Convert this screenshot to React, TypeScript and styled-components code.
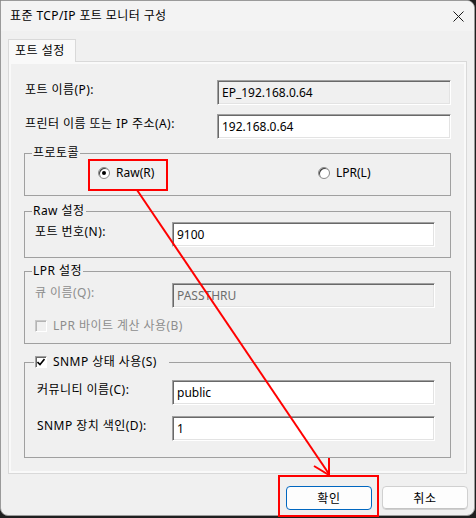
import styled, { createGlobalStyle } from 'styled-components';

const GlobalStyle = createGlobalStyle`
  html, body {
    margin: 0;
    padding: 0;
    background: #1f1f1f;
  }
  body {
    font-family: 'Noto Sans', 'Noto Sans CJK KR', sans-serif;
    font-size: 12px;
    color: #000;
  }
`;

const Screen = styled.div`
  position: relative;
  width: 476px;
  height: 518px;
`;

const Window = styled.div`
  box-sizing: border-box;
  width: 475px;
  height: 516px;
  display: flex;
  flex-direction: column;
  background: #f0f0f0;
  border: 1px solid #9a9a9a;
  border-radius: 0 8px 8px 8px;
  overflow: hidden;
`;

const TitleBar = styled.div`
  height: 30px;
  flex: none;
  display: flex;
  align-items: center;
  justify-content: space-between;
  padding: 0 9px 0 9px;
  background: #f3f3f3;
`;

const Title = styled.span`
  font-size: 12px;
  line-height: 16px;
  letter-spacing: 0.4px;
  color: #000;
`;

const CloseIcon = styled.svg`
  width: 11px;
  height: 11px;
  margin-right: 1px;
`;

const Body = styled.div`
  flex: 1;
  display: flex;
  flex-direction: column;
  padding: 8px 6px 0 7px;
`;

const TabStrip = styled.div`
  display: flex;
  position: relative;
  z-index: 1;
  margin-bottom: -1px;
`;

const Tab = styled.div`
  box-sizing: border-box;
  height: 23px;
  width: 68px;
  padding: 3px 0 0 6px;
  border: 1px solid #d9d9d9;
  border-bottom: none;
  background: #f9f9f9;
  line-height: 16px;
  letter-spacing: 0.5px;
`;

const Panel = styled.div`
  box-sizing: border-box;
  width: 459px;
  height: 413px;
  display: flex;
  flex-direction: column;
  padding: 18px 15px 0 15px;
  border: 1px solid #d9d9d9;
  box-shadow: inset 0 0 0 2px #f9f9f9;
`;

const FieldRow = styled.div<{ $gap?: number }>`
  display: flex;
  align-items: flex-start;
  margin-top: ${(p) => p.$gap ?? 0}px;
`;

const Label = styled.span<{ $width: number; $indent?: number; $disabled?: boolean }>`
  box-sizing: border-box;
  width: ${(p) => p.$width}px;
  flex: none;
  padding: 2px 0 0 ${(p) => p.$indent ?? 0}px;
  line-height: 16px;
  letter-spacing: 0.45px;
  color: ${(p) => (p.$disabled ? '#8d8d8d' : '#000')};
`;

const TextBox = styled.div<{ $width: number; $readOnly?: boolean; $disabled?: boolean }>`
  box-sizing: border-box;
  width: ${(p) => p.$width}px;
  height: 25px;
  padding: 3px 4px 0 4px;
  line-height: 17px;
  background: ${(p) => (p.$readOnly || p.$disabled ? '#f0f0f0' : '#fff')};
  color: ${(p) => (p.$disabled ? '#6d6d6d' : '#000')};
  border-top: 1px solid #a0a0a0;
  border-left: 1px solid #a0a0a0;
  border-right: 1px solid #fff;
  border-bottom: 1px solid #fff;
  box-shadow: inset 1px 1px 0 #696969, inset -1px -1px 0 #e3e3e3;
  white-space: nowrap;
`;

const Group = styled.fieldset<{ $gap: number }>`
  margin: ${(p) => p.$gap}px 0 0 0;
  padding: 0;
  min-width: 0;
  border: 1px solid #a0a0a0;
`;

const Legend = styled.legend<{ $offset?: number; $trail?: number }>`
  display: flex;
  align-items: center;
  margin-left: ${(p) => p.$offset ?? 7}px;
  padding: 0 ${(p) => p.$trail ?? 1}px 0 1px;
  line-height: 16px;
  height: 16px;
  letter-spacing: 0.45px;
`;

const GroupBody = styled.div<{ $top: number; $bottom: number }>`
  display: flex;
  flex-direction: column;
  padding: ${(p) => p.$top}px 15px ${(p) => p.$bottom}px 10px;
`;

const RadioRow = styled.div`
  display: grid;
  grid-template-columns: 220px auto;
  padding-left: 63px;
`;

const RadioItem = styled.label`
  display: flex;
  align-items: center;
  gap: 6px;
  height: 16px;
  line-height: 16px;
`;

const RadioCircle = styled.span<{ $checked?: boolean }>`
  position: relative;
  box-sizing: border-box;
  width: 12px;
  height: 12px;
  border-radius: 50%;
  background: #fff;
  border: 1px solid #8a8a8a;
  box-shadow: inset 1px 1px 0 #404040;

  &::after {
    content: '';
    display: ${(p) => (p.$checked ? 'block' : 'none')};
    position: absolute;
    left: 3px;
    top: 3px;
    width: 4px;
    height: 4px;
    border-radius: 50%;
    background: #000;
  }
`;

const CheckRow = styled.label<{ $gap?: number; $disabled?: boolean }>`
  display: flex;
  align-items: center;
  gap: 6px;
  height: 16px;
  line-height: 16px;
  letter-spacing: 0.45px;
  margin-top: ${(p) => p.$gap ?? 0}px;
  color: ${(p) => (p.$disabled ? '#8d8d8d' : '#000')};
`;

const CheckBox = styled.span<{ $disabled?: boolean }>`
  box-sizing: border-box;
  width: 12px;
  height: 12px;
  flex: none;
  display: flex;
  align-items: center;
  justify-content: center;
  background: ${(p) => (p.$disabled ? '#f0f0f0' : '#fff')};
  border-top: 1px solid ${(p) => (p.$disabled ? '#c8c8c8' : '#a0a0a0')};
  border-left: 1px solid ${(p) => (p.$disabled ? '#c8c8c8' : '#a0a0a0')};
  border-right: 1px solid #fff;
  border-bottom: 1px solid #fff;
  box-shadow: inset 1px 1px 0 ${(p) => (p.$disabled ? '#b4b4b4' : '#696969')};
`;

const ButtonBar = styled.div`
  display: flex;
  justify-content: flex-end;
  gap: 10px;
  margin-top: 12px;
`;

const Button = styled.button<{ $primary?: boolean }>`
  box-sizing: border-box;
  width: 86px;
  height: 24px;
  padding: 0;
  font-family: inherit;
  font-size: 12px;
  letter-spacing: 0.6px;
  color: #000;
  background: #fdfdfd;
  border-radius: 4px;
  border: 1px solid ${(p) => (p.$primary ? '#0067c0' : '#d0d0d0')};
  box-shadow: ${(p) => (p.$primary ? 'none' : 'inset 0 -1px 0 #c4c4c4')};
`;

const Annotation = styled.svg`
  position: absolute;
  left: 0;
  top: 0;
  pointer-events: none;
`;

const App = () => (
  <Screen>
    <GlobalStyle />
    <Window>
      <TitleBar>
        <Title>표준 TCP/IP 포트 모니터 구성</Title>
        <CloseIcon viewBox="0 0 11 11">
          <path d="M0.5 0.5 L10.5 10.5 M10.5 0.5 L0.5 10.5" stroke="#1a1a1a" strokeWidth="1" />
        </CloseIcon>
      </TitleBar>
      <Body>
        <TabStrip>
          <Tab>포트 설정</Tab>
        </TabStrip>
        <Panel>
          <FieldRow>
            <Label $width={193} $indent={1}>포트 이름(P):</Label>
            <TextBox $width={235} $readOnly>EP_192.168.0.64</TextBox>
          </FieldRow>
          <FieldRow $gap={9}>
            <Label $width={193} $indent={1}>프린터 이름 또는 IP 주소(A):</Label>
            <TextBox $width={235}>192.168.0.64</TextBox>
          </FieldRow>

          <Group $gap={6}>
            <Legend>프로토콜</Legend>
            <GroupBody $top={4} $bottom={14}>
              <RadioRow>
                <RadioItem>
                  <RadioCircle $checked />
                  Raw(R)
                </RadioItem>
                <RadioItem>
                  <RadioCircle />
                  LPR(L)
                </RadioItem>
              </RadioRow>
            </GroupBody>
          </Group>

          <Group $gap={7}>
            <Legend>Raw 설정</Legend>
            <GroupBody $top={3} $bottom={10}>
              <FieldRow>
                <Label $width={137}>포트 번호(N):</Label>
                <TextBox $width={263}>9100</TextBox>
              </FieldRow>
            </GroupBody>
          </Group>

          <Group $gap={5}>
            <Legend>LPR 설정</Legend>
            <GroupBody $top={4} $bottom={9}>
              <FieldRow>
                <Label $width={137} $disabled>큐 이름(Q):</Label>
                <TextBox $width={263} $disabled>PASSTHRU</TextBox>
              </FieldRow>
              <CheckRow $gap={10} $disabled>
                <CheckBox $disabled />
                LPR 바이트 계산 사용(B)
              </CheckRow>
            </GroupBody>
          </Group>

          <Group $gap={10}>
            <Legend $offset={9} $trail={12}>
              <CheckRow>
                <CheckBox>
                  <svg width="8" height="8" viewBox="0 0 8 8">
                    <path d="M0.5 4 L3 6.5 L7.5 1" stroke="#000" strokeWidth="1.6" fill="none" />
                  </svg>
                </CheckBox>
                SNMP 상태 사용(S)
              </CheckRow>
            </Legend>
            <GroupBody $top={10} $bottom={16}>
              <FieldRow>
                <Label $width={137} $indent={2}>커뮤니티 이름(C):</Label>
                <TextBox $width={263}>public</TextBox>
              </FieldRow>
              <FieldRow $gap={11}>
                <Label $width={137} $indent={2}>SNMP 장치 색인(D):</Label>
                <TextBox $width={263}>1</TextBox>
              </FieldRow>
            </GroupBody>
          </Group>
        </Panel>
        <ButtonBar>
          <Button $primary>확인</Button>
          <Button>취소</Button>
        </ButtonBar>
      </Body>
    </Window>

    <Annotation width="476" height="518" viewBox="0 0 476 518">
      <rect x="89" y="160" width="78" height="30" fill="none" stroke="#f00" strokeWidth="2" />
      <rect x="279" y="476" width="99" height="40" fill="none" stroke="#f00" strokeWidth="2" />
      <path d="M137 190 L329 474" stroke="#f00" strokeWidth="2" fill="none" />
      <path d="M314 466 L329 475 L329 458" stroke="#f00" strokeWidth="2" fill="none" strokeLinejoin="miter" />
    </Annotation>
  </Screen>
);

export default App;
